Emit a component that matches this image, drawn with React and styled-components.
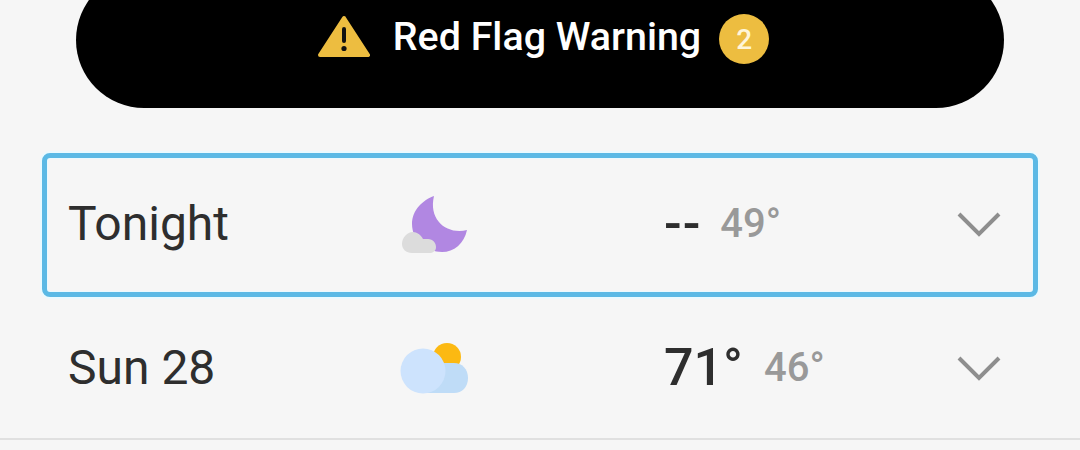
import React from "react";
import styled, { createGlobalStyle } from "styled-components";

const Global = createGlobalStyle`
  html, body { margin: 0; padding: 0; background: #f6f6f6; }
  body { font-family: Roboto, "Liberation Sans", sans-serif; overflow: hidden; }
`;

const Page = styled.div`
  width: 1080px;
  height: 450px;
  overflow: hidden;
  background: #f6f6f6;
`;

const Banner = styled.div`
  box-sizing: border-box;
  width: 928px;
  height: 136px;
  margin: -28px 0 0 76px;
  background: #000;
  border-radius: 68px;
  display: flex;
  align-items: flex-start;
  justify-content: center;
  padding: 43px 0 0 7px;
  color: #fff;
`;

const BannerTitle = styled.span`
  font-size: 39.4px;
  font-weight: 500;
  line-height: 44px;
  margin: 0 18px 0 23px;
`;

const Count = styled.span`
  width: 50px;
  height: 50px;
  margin-top: -1px;
  border-radius: 50%;
  background: #edbd40;
  color: #fff6d8;
  font-size: 28px;
  font-weight: 500;
  display: flex;
  align-items: center;
  justify-content: center;
`;

const List = styled.div`
  margin-top: 45px;
  display: flex;
  flex-direction: column;
`;

const Row = styled.div`
  box-sizing: border-box;
  margin: 0 42px;
  height: ${p => p.$height}px;
  padding: 0 0 ${p => p.$lift}px 21px;
  display: grid;
  grid-template-columns: 332px 264px 293px 42px;
  align-items: center;
  color: #2e2e2e;
  border: 5px solid ${p => (p.$focused ? "#5bb9e5" : "transparent")};
  border-radius: 8px;
  box-shadow: ${p => (p.$focused ? "0 0 0 2px #eafaff, inset 0 0 0 1px #eafaff" : "none")};
`;

const Day = styled.span`
  font-size: 48px;
  line-height: 54px;
`;

const IconCell = styled.div`
  margin-left: ${p => p.$shift}px;
`;

const Temps = styled.div`
  display: flex;
  align-items: center;
  font-weight: 500;
`;

const High = styled.span`
  font-size: 52px;
  line-height: 60px;
  margin-right: ${p => p.$gap}px;
  letter-spacing: ${p => p.$spacing || 0}px;
`;

const Low = styled.span`
  font-size: 40px;
  line-height: 60px;
  color: #999;
`;

const Divider = styled.div`
  height: 2px;
  background: #e0e0e0;
`;

const ChevronCell = styled.div`
  padding-top: 3px;
`;

const Warning = () => (
  <svg width="52" height="44" viewBox="0 0 52 44" style={{ display: "block" }}>
    <path d="M26 3 L50 40 H2 Z" fill="#edbd40" stroke="#edbd40" strokeWidth="4" strokeLinejoin="round" />
    <path d="M26 14 V26" stroke="#111" strokeWidth="4" strokeLinecap="round" />
    <circle cx="26" cy="33.5" r="2.6" fill="#111" />
  </svg>
);

const Moon = () => (
  <svg width="68" height="60" viewBox="0 0 68 60" style={{ display: "block" }}>
    <path d="M33 2 C22 6 11 16 11 30 C11 47 26 58 41 58 C53 58 63 50 66 36 C47 41 27 27 33 2 Z" fill="#b187e2" />
    <path d="M11 59 C5 59 1 55 1 50 C1 44 6 38 12 38 C16 38 20 41 22 45 H27 C32 45 35 49 35 53 C35 57 32 59 28 59 Z" fill="#dcdcdc" />
  </svg>
);

const SunCloud = () => (
  <svg width="68" height="52" viewBox="0 0 68 52" style={{ display: "block" }}>
    <circle cx="47" cy="15" r="14" fill="#fcb912" />
    <path d="M24 51 V21 H54 C62 21 68 27 68 36 C68 45 62 51 54 51 Z" fill="#bfdcf7" />
    <circle cx="23" cy="29" r="22.5" fill="#cde3fd" />
  </svg>
);

const Chevron = () => (
  <svg width="44" height="26" viewBox="0 0 44 26" style={{ display: "block" }}>
    <path d="M2 2 L22 22 L42 2" fill="none" stroke="#8e8e8e" strokeWidth="4" />
  </svg>
);

export default function App() {
  return (
    <Page>
      <Global />
      <Banner>
        <Warning />
        <BannerTitle>Red Flag Warning</BannerTitle>
        <Count>2</Count>
      </Banner>
      <List>
        <Row $focused $height={144} $lift={3}>
          <Day>Tonight</Day>
          <IconCell $shift={1}><Moon /></IconCell>
          <Temps>
            <High $gap={19} $spacing={1}>--</High>
            <Low>49°</Low>
          </Temps>
          <ChevronCell><Chevron /></ChevronCell>
        </Row>
        <Row $height={141} $lift={0}>
          <Day>Sun 28</Day>
          <IconCell $shift={0}><SunCloud /></IconCell>
          <Temps>
            <High $gap={21}>71°</High>
            <Low>46°</Low>
          </Temps>
          <ChevronCell><Chevron /></ChevronCell>
        </Row>
        <Divider />
      </List>
    </Page>
  );
}
